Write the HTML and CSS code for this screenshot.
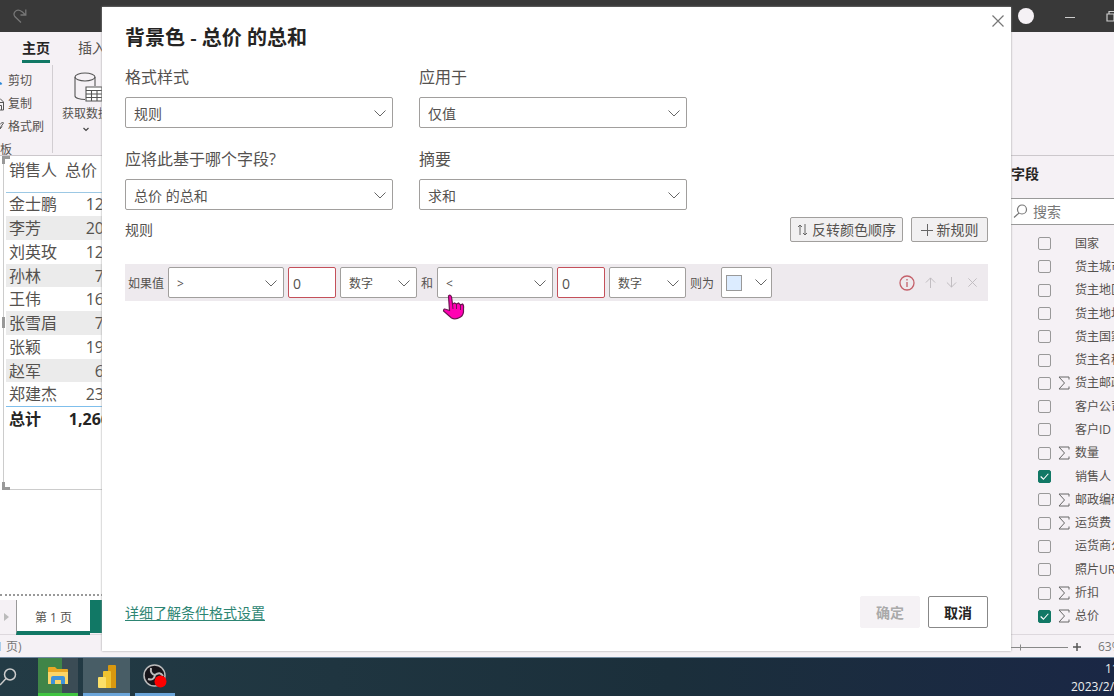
FILE: index.html
```html
<!DOCTYPE html>
<html lang="zh-CN">
<head>
<meta charset="utf-8">
<title>背景色 - 总价 的总和</title>
<link rel="stylesheet" href="styles.css">
</head>
<body>
<div class="app">
  <header class="titlebar">
    <svg class="redo" width="14" height="16" viewBox="0 0 14 16" fill="none" stroke="#777" stroke-width="1.3"><path d="M8 14.500 1.800 8.500C-.5 5 3 1 7 2.500Q9.500 3.500 12 6.500M12.800 1.500V7H7.500"/></svg>
    <div class="window-tools">
      <span class="avatar"></span>
      <svg width="10" height="10" viewBox="0 0 10 10" stroke="#ccc"><path d="M0 6.500h10"/></svg>
      <svg class="restore" width="11" height="12" viewBox="0 0 11 12" fill="none" stroke="#ccc" stroke-width="1.200"><path d="M1 4h7v7H1zM3 4V1.500h7V9H8"/></svg>
    </div>
  </header>

  <div class="ribbon">
    <nav class="ribbon-tabs"><button class="rtab active">主页</button><button class="rtab">插入</button></nav>
    <div class="ribbon-body">
      <div class="clipboard">
        <button class="clip"><svg width="8" height="14" viewBox="0 0 8 14"><path d="M0 8.500 1.500 10.500" stroke="#2b88d8" stroke-width="2"/></svg>剪切</button>
        <button class="clip"><svg width="8" height="14" viewBox="0 0 8 14" fill="none" stroke="#555"><path d="M0 1.500 3.500 5v8H0M0 5.500h3.500M0 8.500h1.500V13"/></svg>复制</button>
        <button class="clip"><svg width="8" height="14" viewBox="0 0 8 14" fill="none" stroke="#555"><path d="M0 4.500 2.500 2l1 1L0 8M2 6.500 0 9"/></svg>格式刷</button>
        <span class="clip-name">板</span>
      </div>
      <button class="getdata">
        <svg width="32" height="32" viewBox="0 0 32 32" fill="none" stroke="#555" stroke-width="1.100"><path d="M5 5v19c0 2 5 3.500 10 3.500M25 5v9"/><ellipse cx="15" cy="5" rx="10" ry="4"/><path fill="#fff" d="M16 15h16v14H16z"/><path d="M16 18.500h16M16 22h16M16 25.500h16M21.500 18.500V29M27 18.500V29"/></svg>
        <span>获取数据</span>
        <svg width="6" height="5" viewBox="0 0 6 5" fill="none" stroke="#444" stroke-width="1.200"><path d="m.5 1 2.500 2.500L5.500 1"/></svg>
      </button>
    </div>
  </div>

  <div class="workspace">
    <main class="report">
      <div class="canvas">
        <div class="visual">
          <i class="handle tl"></i><i class="handle ml"></i><i class="handle bl"></i>
          <table class="sales">
            <thead><tr><th>销售人</th><th class="num">总价</th></tr></thead>
            <tbody>
              <tr><td>金士鹏</td><td class="num">12</td></tr>
              <tr><td>李芳</td><td class="num">20</td></tr>
              <tr><td>刘英玫</td><td class="num">12</td></tr>
              <tr><td>孙林</td><td class="num">7</td></tr>
              <tr><td>王伟</td><td class="num">16</td></tr>
              <tr><td>张雪眉</td><td class="num">7</td></tr>
              <tr><td>张颖</td><td class="num">19</td></tr>
              <tr><td>赵军</td><td class="num">6</td></tr>
              <tr><td>郑建杰</td><td class="num">23</td></tr>
            </tbody>
            <tfoot><tr><td>总计</td><td class="total">1,266</td></tr></tfoot>
          </table>
        </div>
      </div>
      <div class="pages">
        <button class="page-next" aria-label="下一页"><svg width="5" height="8" viewBox="0 0 5 8"><path d="m0 0 5 4-5 4z" fill="#bbb"/></svg></button>
        <button class="page">第 1 页</button>
        <button class="page-add" aria-label="新建页"></button>
      </div>
    </main>
    <aside class="fields">
      <h2>字段</h2>
      <label class="search"><svg width="15" height="15" viewBox="0 0 15 15" fill="none" stroke="#777" stroke-width="1.200"><circle cx="9" cy="5.500" r="4.500"/><path d="M6 9 1 13.500"/></svg><input type="text" placeholder="搜索" aria-label="搜索"></label>
      <div class="field-list">
        <label><input type="checkbox"><i></i><span>国家</span></label>
        <label><input type="checkbox"><i></i><span>货主城市</span></label>
        <label><input type="checkbox"><i></i><span>货主地区</span></label>
        <label><input type="checkbox"><i></i><span>货主地址</span></label>
        <label><input type="checkbox"><i></i><span>货主国家</span></label>
        <label><input type="checkbox"><i></i><span>货主名称</span></label>
        <label><input type="checkbox"><i><svg class="sum" viewBox="0 0 12 14"><path d="M11 3.500V1H1l5.500 6L1 13h10v-2.500"/></svg></i><span>货主邮政编码</span></label>
        <label><input type="checkbox"><i></i><span>客户公司</span></label>
        <label><input type="checkbox"><i></i><span>客户ID</span></label>
        <label><input type="checkbox"><i><svg class="sum" viewBox="0 0 12 14"><path d="M11 3.500V1H1l5.500 6L1 13h10v-2.500"/></svg></i><span>数量</span></label>
        <label><input type="checkbox" checked><i></i><span>销售人</span></label>
        <label><input type="checkbox"><i><svg class="sum" viewBox="0 0 12 14"><path d="M11 3.500V1H1l5.500 6L1 13h10v-2.500"/></svg></i><span>邮政编码</span></label>
        <label><input type="checkbox"><i><svg class="sum" viewBox="0 0 12 14"><path d="M11 3.500V1H1l5.500 6L1 13h10v-2.500"/></svg></i><span>运货费</span></label>
        <label><input type="checkbox"><i></i><span>运货商公司</span></label>
        <label><input type="checkbox"><i></i><span>照片URL</span></label>
        <label><input type="checkbox"><i><svg class="sum" viewBox="0 0 12 14"><path d="M11 3.500V1H1l5.500 6L1 13h10v-2.500"/></svg></i><span>折扣</span></label>
        <label><input type="checkbox" checked><i><svg class="sum" viewBox="0 0 12 14"><path d="M11 3.500V1H1l5.500 6L1 13h10v-2.500"/></svg></i><span>总价</span></label>
      </div>
    </aside>
  </div>

  <footer class="status">
    <span class="page-count">1 页)</span>
    <div class="zoom">
      <svg width="70" height="10" viewBox="0 0 70 10" stroke="#888"><path d="M0 5.500h70M22.500 2.500v6"/></svg>
      <svg width="8" height="8" viewBox="0 0 8 8" stroke="#555" stroke-width="1.500"><path d="M0 4h8M4 0v8"/></svg>
      <span class="pct">63%</span>
    </div>
  </footer>

  <footer class="taskbar">
    <button class="task find" aria-label="搜索"><svg width="17" height="18" viewBox="0 0 17 18" fill="none" stroke="#ccc" stroke-width="1.500"><circle cx="10" cy="6.500" r="5.500"/><path d="M6 10.500 0 17"/></svg></button>
    <button class="task files" aria-label="文件资源管理器"><svg width="22" height="20" viewBox="0 0 22 20"><path d="M1 2q0-1 1-1h6l2 2h10q1 0 1 1v4H1z" fill="#e8a825"/><path d="M1 6h20v12H1z" fill="#fbd567"/><path d="M4 18v-6q0-2 2-2h10q2 0 2 2v6h-4v-4H8v4z" fill="#3f93d9"/></svg></button>
    <button class="task powerbi" aria-label="Power BI"><svg width="20" height="24" viewBox="0 0 20 24"><path d="M11 2q0-1 1-1h6q1 0 1 1v22h-8z" fill="#d9980f"/><path d="M6 8q0-1 1-1h6q1 0 1 1v16H6z" fill="#f0c330"/><path d="M1 14q0-1 1-1h6q1 0 1 1v10H2q-1 0-1-1z" fill="#fbdf68"/></svg></button>
    <button class="task obs" aria-label="OBS"><svg width="24" height="24" viewBox="0 0 24 24"><circle cx="11.500" cy="11.500" r="10.500" fill="#17151a" stroke="#bbb" stroke-width="1.500"/><path d="M8 4q-1 6 4 7 5-4 8 1M12 11q-1 6-7 4" fill="none" stroke="#bbb" stroke-width="2"/><circle cx="17.500" cy="17.500" r="6" fill="#f00"/></svg></button>
    <div class="clock"><span>11:</span><span>2023/2/</span></div>
  </footer>

  <section class="dialog" role="dialog" aria-labelledby="dlg-title">
    <button class="close" aria-label="关闭"><svg width="12" height="12" viewBox="0 0 12 12" stroke="#777" stroke-width="1.200"><path d="m.5.5 11 11M11.500.5l-11 11"/></svg></button>
    <h1 id="dlg-title">背景色 - 总价 的总和</h1>
    <div class="form">
      <div class="field"><label for="style">格式样式</label><div class="select"><select id="style"><option>规则</option></select><svg class="chev" viewBox="0 0 12 7"><path d="m.5.5 5.500 5.500L11.500.5"/></svg></div></div>
      <div class="field"><label for="apply">应用于</label><div class="select"><select id="apply"><option>仅值</option></select><svg class="chev" viewBox="0 0 12 7"><path d="m.5.5 5.500 5.500L11.500.5"/></svg></div></div>
      <div class="field"><label for="base">应将此基于哪个字段?</label><div class="select"><select id="base"><option>总价 的总和</option></select><svg class="chev" viewBox="0 0 12 7"><path d="m.5.5 5.500 5.500L11.500.5"/></svg></div></div>
      <div class="field"><label for="summary">摘要</label><div class="select"><select id="summary"><option>求和</option></select><svg class="chev" viewBox="0 0 12 7"><path d="m.5.5 5.500 5.500L11.500.5"/></svg></div></div>
    </div>
    <div class="rules-head">
      <span>规则</span>
      <button class="tool"><svg width="11" height="12" viewBox="0 0 11 12" fill="none" stroke="#666"><path d="M3 11V1M1 3 3 1l2 2M8 0v11M6 9l2 2 2-2"/></svg>反转颜色顺序</button>
      <button class="tool"><svg width="12" height="12" viewBox="0 0 12 12" stroke="#666"><path d="M0 6.500h12M6.500 0v12"/></svg>新规则</button>
    </div>
    <div class="rule">
      <label for="op1">如果值</label>
      <div class="select op"><select id="op1"><option>&gt;</option></select><svg class="chev" viewBox="0 0 12 7"><path d="m.5.5 5.500 5.500L11.500.5"/></svg></div>
      <input class="value" type="text" value="0" aria-label="下限">
      <div class="select unit"><select aria-label="下限类型"><option>数字</option></select><svg class="chev" viewBox="0 0 12 7"><path d="m.5.5 5.500 5.500L11.500.5"/></svg></div>
      <label for="op2">和</label>
      <div class="select op"><select id="op2"><option>&lt;</option></select><svg class="chev" viewBox="0 0 12 7"><path d="m.5.5 5.500 5.500L11.500.5"/></svg>
        <svg class="pointer" width="23" height="28" viewBox="0 0 23 28"><path d="M6.500 2q2-2 3 1l1 7 2-1 2 1 2-1 2 2 2-1q1.500 1 1 5 .5 6-3 8-5 3-9 1L1.500 17q0-3 3-1.500l3 1z" fill="#ff00b3" stroke="#6b1450" stroke-width="1.200"/><path d="m10.500 10 .5 5M14.500 10v5M18.500 11v5" stroke="#6b1450"/></svg></div>
      <input class="value" type="text" value="0" aria-label="上限">
      <div class="select unit"><select aria-label="上限类型"><option>数字</option></select><svg class="chev" viewBox="0 0 12 7"><path d="m.5.5 5.500 5.500L11.500.5"/></svg></div>
      <span>则为</span>
      <button class="color" aria-label="颜色"><i></i><svg class="arrow" viewBox="0 0 12 7"><path d="m.5.5 5.500 5.500L11.500.5"/></svg></button>
      <div class="actions">
        <svg width="16" height="16" viewBox="0 0 16 16" fill="none" stroke="#c4606a" stroke-width="1.300"><circle cx="8" cy="8" r="7"/><path d="M8 7v5M8 4v1.500"/></svg>
        <button aria-label="上移"><svg viewBox="0 0 12 12"><path d="M6 12V1M1 6l5-5 5 5"/></svg></button>
        <button aria-label="下移"><svg viewBox="0 0 12 12"><path d="M6 0v11M1 6l5 5 5-5"/></svg></button>
        <button aria-label="删除"><svg viewBox="0 0 12 12"><path d="m1.500 1.500 9 9M10.500 1.500l-9 9"/></svg></button>
      </div>
    </div>
    <div class="dialog-foot">
      <a href="#">详细了解条件格式设置</a>
      <button class="btn" disabled>确定</button>
      <button class="btn primary">取消</button>
    </div>
  </section>
</div>
</body>
</html>
```
FILE: styles.css
```css
* { box-sizing: border-box; }
body { margin: 0; }
body, button, input, select {
  font-family: "Open Sans", "Noto Sans CJK SC", sans-serif;
  color: #55524f;
}
button { background: none; border: 0; padding: 0; white-space: nowrap; }
svg { display: block; flex: none; }

.app { position: relative; height: 100vh; display: flex; flex-direction: column; overflow: hidden; background: #f5f1f5; }

.titlebar { height: 32px; flex: none; background: #393939; display: flex; align-items: center; justify-content: space-between; padding-left: 13px; overflow: hidden; }
.window-tools { display: flex; align-items: center; gap: 31px; width: 96px; }
.avatar { width: 16px; height: 16px; border-radius: 50%; background: #f5f1f5; flex: none; }

.ribbon { height: 124px; flex: none; border-bottom: 1px solid #ccc8cc; overflow: hidden; }
.ribbon-tabs { display: flex; gap: 28px; padding: 4px 22px 0; height: 33px; }
.rtab { font-size: 14px; height: 27px; padding: 0; border-bottom: 3px solid transparent; line-height: 22px; }
.rtab.active { font-weight: 700; color: #252423; border-bottom-color: #117865; }
.ribbon-body { display: flex; }
.clipboard { display: flex; flex-direction: column; width: 53px; height: 88px; border-right: 1px solid #d2ced2; padding-top: 4px; }
.clip { display: flex; align-items: center; font-size: 12px; line-height: 23px; height: 23px; flex: none; }
.clip-name { font-size: 12px; line-height: 23px; }
.getdata { display: flex; flex-direction: column; align-items: center; font-size: 12px; line-height: 18px; padding: 7px 0 0 9px; align-self: start; }
.getdata > svg:last-child { margin-top: 4px; }
.getdata span { margin-top: 1px; }

.workspace { flex: 1; display: flex; min-height: 0; }
.report { flex: 1; display: flex; flex-direction: column; min-width: 0; }
.canvas { flex: 1; background: #fff; padding-left: 3px; }
.canvas::after { content: ""; display: block; height: 104px; margin-left: -3px; border-bottom: 2px dotted #999; }
.visual { position: relative; height: 334px; border-left: 1px solid #ccc; border-bottom: 1px solid #ccc; padding-left: 2px; }
.handle { position: absolute; left: -2px; width: 8px; height: 8px; border-left: 3px solid #999; }
.tl { top: 0; border-top: 3px solid #999; }
.ml { top: 161px; height: 11px; }
.bl { bottom: -1px; border-bottom: 3px solid #999; }
.sales { width: 104px; border-collapse: collapse; font-size: 16px; line-height: 22px; white-space: nowrap; }
.sales th, .sales td { padding: 0 0 0 3px; font-weight: 400; text-align: left; height: 24px; }
.sales th { height: 36px; padding-bottom: 7px; border-bottom: 1px solid #9cc8e4; }
.sales .num { text-align: right; padding-right: 6px; }
.sales th.num { padding-right: 13px; }
.sales tbody tr:nth-child(even) { background: #ebebeb; }
.sales tbody tr:nth-child(4n) td { height: 23px; }
.sales tfoot td { font-weight: 700; color: #252423; border-top: 1px solid #7fbfec; height: 26px; }
.sales tfoot .total { padding: 0; text-align: right; }

.pages { display: flex; height: 35px; flex: none; border-bottom: 1px solid #ddd8dd; }
.page-next { width: 16px; padding-left: 4px; }
.page { width: 74px; height: 35px; background: #fff; border-left: 1px solid #999; border-bottom: 4px solid #117865; padding-top: 2px; font-size: 12px; }
.page-add { width: 30px; height: 33px; background: #117865; }

.fields { width: 103px; display: flex; flex-direction: column; overflow: hidden; border-bottom: 1px solid #ddd8dd; }
.fields h2 { margin: 0; font-size: 14px; line-height: 20px; padding: 8px 0 14px; color: #252423; }
.search { display: flex; align-items: center; gap: 5px; height: 27px; flex: none; background: #fff; border: solid #999; border-width: 1px 0; padding-left: 2px; }
.search input { width: 70px; border: 0; outline: 0; padding: 0; font-size: 14px; line-height: 20px; background: none; }
.search input::placeholder { color: #777; }
.field-list { flex: 1; display: grid; grid-auto-rows: 1fr; padding: 7px 0 6px 27px; }
.field-list label { display: grid; grid-template-columns: 20px 17px auto; align-items: center; font-size: 12px; line-height: 18px; white-space: nowrap; }
.field-list input { appearance: none; margin: 0; width: 13px; height: 13px; border: 1px solid #999; border-radius: 2px; }
.field-list input:checked { border-color: #117865; background: #117865 url("data:image/svg+xml,%3Csvg xmlns='http://www.w3.org/2000/svg' viewBox='0 0 10 10'%3E%3Cpath d='M1.500 5 4 7.500 8.500 2.500' fill='none' stroke='white'/%3E%3C/svg%3E"); }
.sum { width: 12px; height: 14px; fill: none; stroke: #666; }

.status { height: 22px; flex: none; display: flex; align-items: center; justify-content: space-between; font-size: 12px; line-height: 18px; color: #777; overflow: hidden; padding-top: 2px; }
.page-count { margin-left: -4px; }
.zoom { display: flex; align-items: center; gap: 5px; width: 116px; }
.pct { margin-left: 12px; }

.taskbar { height: 39px; flex: none; display: flex; border-top: 1px solid #718aa0; background: linear-gradient(90deg, #233b45, #1b2f3b 60%, #1a2745); overflow: hidden; }
.task { display: grid; place-items: center; width: 40px; margin-right: 5px; }
.find { width: 38px; margin: 0; justify-content: start; }
.files { border-bottom: 3px solid #3fc43f; background: linear-gradient(90deg, #408548 60%, #3b4c55 60%); }
.powerbi { width: 47px; background: #485d66; border-bottom: 3px solid #6aa5da; }
.obs { border-bottom: 3px solid #6aa5da; }
.clock { margin-left: auto; width: 43px; display: flex; flex-direction: column; font-size: 12px; line-height: 18px; padding-top: 2px; color: #eee; white-space: nowrap; }
.clock span:first-child { padding-left: 34px; }

.dialog { position: absolute; inset: 7px 103px 45px 102px; background: #fff; box-shadow: 0 0 2px #999; padding: 17px 23px 23px; display: flex; flex-direction: column; }
.close { position: absolute; top: 8px; right: 7px; }
.dialog h1 { margin: 0; font-size: 20px; line-height: 28px; font-weight: 600; color: #252423; }
.form { display: grid; grid-template-columns: repeat(2, minmax(0, 268px)); gap: 20px 26px; padding-top: 14px; }
.field label { display: block; font-size: 16px; line-height: 22px; margin-bottom: 9px; }
.select { position: relative; }
.select select { appearance: none; display: block; width: 100%; height: 31px; border: 1px solid #a19f9d; border-radius: 2px; background: #fff; padding: 2px 8px 0; font-size: 14px; }
.chev { position: absolute; right: 7px; top: 13px; pointer-events: none; }
.chev, .arrow { width: 12px; height: 7px; fill: none; stroke: #666; }
.rules-head { display: flex; align-items: center; gap: 8px; font-size: 14px; line-height: 20px; padding-top: 7px; }
.rules-head span { margin-right: auto; }
.tool { display: flex; align-items: center; justify-content: center; gap: 4px; min-width: 77px; height: 25px; padding: 0 6px; font-size: 14px; line-height: 20px; background: #f1f0f1; border: 1px solid #a19f9d; border-radius: 2px; }
.rule { display: flex; align-items: center; gap: 4px; height: 37px; margin-top: 22px; padding: 0 10px 0 3px; background: #eeeaee; font-size: 12px; }
.rule select { font-size: 12px; }
.rule > * { flex: none; }
.op { width: 116px; }
.unit { width: 77px; }
.value { width: 48px; height: 31px; border: 1px solid #c4505a; border-radius: 2px; padding: 2px 4px 0; font-size: 14px; background: #fff; }
.color { display: flex; align-items: center; justify-content: space-between; width: 51px; height: 31px; margin-left: 3px; padding: 0 4px; border: 1px solid #a19f9d; border-radius: 2px; background: #fff; }
.color i { width: 16px; height: 16px; background: #dcecff; border: 1px solid #999; }
.rule > .actions { margin-left: auto; display: flex; align-items: center; gap: 10px; }
.actions button svg { width: 11px; height: 11px; fill: none; stroke: #bdb9bd; }
.pointer { position: absolute; left: 5px; top: 27px; z-index: 1; }
.dialog-foot { margin-top: auto; display: flex; align-items: center; gap: 8px; }
.dialog-foot a { margin-right: auto; font-size: 14px; line-height: 20px; padding-top: 2px; color: #2d8573; text-underline-offset: 2px; }
.btn { width: 60px; height: 32px; font-size: 14px; font-weight: 700; border-radius: 2px; border: 1px solid #888; color: #252423; }
.btn:disabled { background: #f5f2f5; border-color: #f5f2f5; color: #aaa; }
```
